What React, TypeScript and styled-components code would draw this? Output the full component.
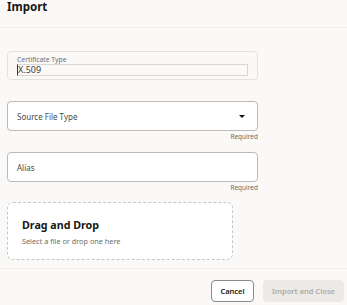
import React from "react";
import styled, { createGlobalStyle } from "styled-components";

const GlobalStyle = createGlobalStyle`
  html, body {
    margin: 0;
    padding: 0;
    background: #faf9f8;
    font-family: "Noto Sans", "Open Sans", sans-serif;
    color: #161513;
  }
`;

const Dialog = styled.div`
  width: 347px;
  height: 305px;
  display: flex;
  flex-direction: column;
  background: #faf9f8;
  overflow: hidden;
`;

const Header = styled.div`
  height: 28px;
  padding: 0 7px;
  border-bottom: 1px solid #efedea;
  box-sizing: border-box;
`;

const Title = styled.h1`
  margin: 0;
  font-size: 11.5px;
  font-weight: 700;
  line-height: 14px;
`;

const Body = styled.div`
  flex: 1;
  padding: 23px 89px 0 7px;
  display: flex;
  flex-direction: column;
`;

const FieldBox = styled.div<{ $readonly?: boolean }>`
  box-sizing: border-box;
  height: ${(p) => (p.$readonly ? "29px" : "30px")};
  border: 1px solid ${(p) => (p.$readonly ? "#e4e2de" : "#bdbab6")};
  border-radius: 4px;
  background: ${(p) => (p.$readonly ? "#faf9f8" : "#ffffff")};
  padding: 0 9px;
  display: flex;
  align-items: center;
  justify-content: space-between;
`;

const ReadonlyBox = styled(FieldBox)`
  flex-direction: column;
  align-items: stretch;
  justify-content: center;
  gap: 0;
`;

const SmallLabel = styled.div`
  font-size: 6.8px;
  line-height: 8px;
  color: #6f6c68;
`;

const ReadonlyValue = styled.div`
  height: 10px;
  border: 1px solid #d9d7d3;
  border-left: 1px solid #3a3836;
  font-size: 9px;
  line-height: 10px;
  color: #3d3b38;
  display: flex;
  align-items: center;
`;

const Placeholder = styled.span`
  font-size: 8px;
  color: #4c4a47;
`;

const Caret = styled.span`
  width: 0;
  height: 0;
  border-left: 3px solid transparent;
  border-right: 3px solid transparent;
  border-top: 3px solid #161513;
  margin-right: 3px;
`;

const Hint = styled.div`
  text-align: right;
  font-size: 6.5px;
  line-height: 8px;
  color: #6f6c68;
  margin-top: 2px;
`;

const Group = styled.div<{ $top: number }>`
  margin-top: ${(p) => p.$top}px;
`;

const DropZone = styled.div`
  box-sizing: border-box;
  width: 226px;
  height: 58px;
  margin-top: 10px;
  border: 1px dashed #c9c6c2;
  border-radius: 6px;
  background: #ffffff;
  padding: 15px 0 0 14px;
`;

const DropTitle = styled.div`
  font-size: 10.7px;
  font-weight: 700;
  line-height: 14px;
  color: #161513;
`;

const DropText = styled.div`
  font-size: 7.3px;
  line-height: 10px;
  color: #6f6c68;
  margin-top: 4px;
`;

const Footer = styled.div`
  height: 37px;
  border-top: 1px solid #efedea;
  display: flex;
  justify-content: flex-end;
  align-items: flex-start;
  gap: 9px;
  padding: 11px 3px 0 0;
  box-sizing: border-box;
`;

const Button = styled.button<{ $disabled?: boolean }>`
  box-sizing: border-box;
  height: 22px;
  padding: 0;
  width: ${(p) => (p.$disabled ? "81px" : "43px")};
  border-radius: 4px;
  border: 1px solid ${(p) => (p.$disabled ? "#eceae6" : "#8b8885")};
  background: ${(p) => (p.$disabled ? "#eceae6" : "#ffffff")};
  color: ${(p) => (p.$disabled ? "#aeaba7" : "#161513")};
  font-family: inherit;
  font-size: 7.5px;
  font-weight: 600;
`;

export default function App() {
  return (
    <>
      <GlobalStyle />
      <Dialog>
        <Header>
          <Title>Import</Title>
        </Header>
        <Body>
          <ReadonlyBox $readonly>
            <SmallLabel>Certificate Type</SmallLabel>
            <ReadonlyValue>X.509</ReadonlyValue>
          </ReadonlyBox>
          <Group $top={21}>
            <FieldBox>
              <Placeholder>Source File Type</Placeholder>
              <Caret />
            </FieldBox>
            <Hint>Required</Hint>
          </Group>
          <Group $top={11}>
            <FieldBox>
              <Placeholder>Alias</Placeholder>
            </FieldBox>
            <Hint>Required</Hint>
          </Group>
          <DropZone>
            <DropTitle>Drag and Drop</DropTitle>
            <DropText>Select a file or drop one here</DropText>
          </DropZone>
        </Body>
        <Footer>
          <Button>Cancel</Button>
          <Button $disabled>Import and Close</Button>
        </Footer>
      </Dialog>
    </>
  );
}
